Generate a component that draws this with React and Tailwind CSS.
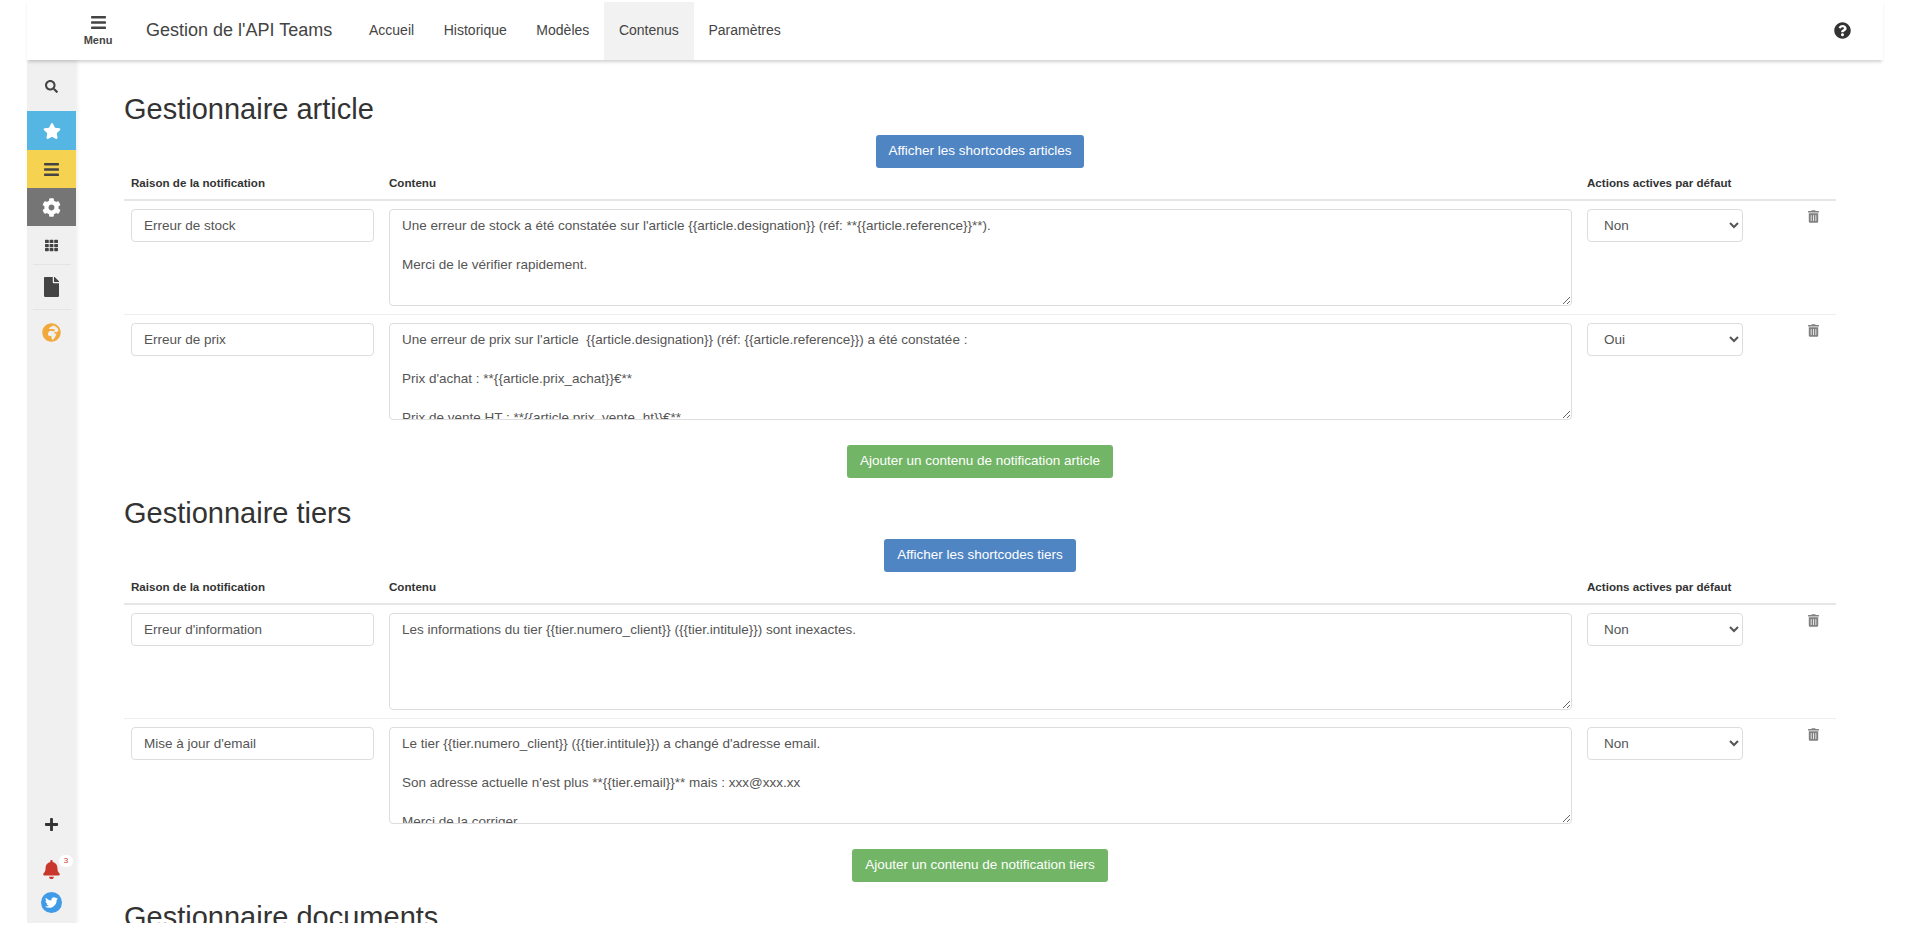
import { FaSearch, FaStar, FaBars, FaCog, FaTh, FaFile, FaGlobeAfrica, FaPlus, FaBell, FaTwitter, FaQuestionCircle, FaTrashAlt } from 'react-icons/fa';

const navLinks = ['Accueil', 'Historique', 'Modèles', 'Contenus', 'Paramètres'];

const sections = [
  {
    title: 'Gestionnaire article',
    shortcodes: 'Afficher les shortcodes articles',
    add: 'Ajouter un contenu de notification article',
    rows: [
      {
        reason: 'Erreur de stock',
        active: 'Non',
        content: "Une erreur de stock a été constatée sur l'article {{article.designation}} (réf: **{{article.reference}}**).\n\nMerci de le vérifier rapidement.",
      },
      {
        reason: 'Erreur de prix',
        active: 'Oui',
        content: "Une erreur de prix sur l'article  {{article.designation}} (réf: {{article.reference}}) a été constatée :\n\nPrix d'achat : **{{article.prix_achat}}€**\n\nPrix de vente HT : **{{article.prix_vente_ht}}€**",
      },
    ],
  },
  {
    title: 'Gestionnaire tiers',
    shortcodes: 'Afficher les shortcodes tiers',
    add: 'Ajouter un contenu de notification tiers',
    rows: [
      {
        reason: "Erreur d'information",
        active: 'Non',
        content: 'Les informations du tier {{tier.numero_client}} ({{tier.intitule}}) sont inexactes.',
      },
      {
        reason: "Mise à jour d'email",
        active: 'Non',
        content: "Le tier {{tier.numero_client}} ({{tier.intitule}}) a changé d'adresse email.\n\nSon adresse actuelle n'est plus **{{tier.email}}** mais : xxx@xxx.xx\n\nMerci de la corriger.",
      },
    ],
  },
];

function Section({ section }) {
  return (
    <section>
      <h2 className="text-[29px] leading-[33px] text-[#333] mb-[9px]">{section.title}</h2>
      <div className="flex justify-center">
        <button className="h-[33px] px-[13px] bg-[#5085c4] rounded-[3px] text-white text-[13.5px]">{section.shortcodes}</button>
      </div>
      <div className="grid grid-cols-[258px_1198px_228px_1fr] mt-[5px] h-[28px] border-b-2 border-[#e6e6e6] text-[11.6px] font-bold text-[#333] leading-[20px]">
        <div className="pl-[7px]">Raison de la notification</div>
        <div className="pl-[7px]">Contenu</div>
        <div className="pl-[7px]">Actions actives par défaut</div>
      </div>
      {section.rows.map((row, i) => (
        <div key={row.reason} className={`grid grid-cols-[258px_1198px_228px_1fr] pt-[8px] h-[113px] ${i > 0 ? 'border-t border-[#eee]' : ''}`}>
          <div className="px-[7px]">
            <input defaultValue={row.reason} className="w-[243px] h-[33px] pb-[1px] px-[12px] border border-[#ddd] rounded-[4px] text-[13.5px] text-[#555] outline-none" />
          </div>
          <div className="px-[7px]">
            <textarea defaultValue={row.content} className="block w-[1183px] h-[97px] px-[12px] py-[6px] border border-[#ddd] rounded-[4px] text-[13.5px] leading-[19.5px] text-[#555] overflow-hidden outline-none" />
          </div>
          <div className="px-[7px]">
            <select defaultValue={row.active} className="w-[156px] h-[33px] pl-[12px] pr-[4px] border border-[#ddd] rounded-[4px] bg-white text-[13.5px] text-[#555] outline-none">
              <option>Non</option>
              <option>Oui</option>
            </select>
          </div>
          <div className="pt-[1px]">
            <FaTrashAlt className="w-[11px] h-[13px] text-[#808080]" />
          </div>
        </div>
      ))}
      <div className="flex justify-center mt-[18px]">
        <button className="h-[33px] px-[13px] bg-[#72b566] rounded-[3px] text-white text-[13.5px]">{section.add}</button>
      </div>
    </section>
  );
}

export default function App() {
  return (
    <div className="h-[945px] overflow-hidden bg-white font-['Liberation_Sans',Arial,sans-serif]">
      <header className="h-[60px] ml-[27px] mr-[37px] flex items-center shadow-[0_3px_3px_-1px_rgba(0,0,0,0.18)] relative z-10 bg-white">
        <div className="w-[56px] ml-[43px] flex flex-col items-center text-[11px] font-bold text-[#444] leading-none">
          <FaBars className="w-[15px] h-[17px] text-[#444]" />
          <span className="mt-[4px]">Menu</span>
        </div>
        <div className="ml-[20px] text-[18px] text-[#444]">Gestion de l'API Teams</div>
        <nav className="ml-[22px] flex h-full items-end text-[14px] text-[#444]">
          {navLinks.map((link) => (
            <div key={link} className={`h-[58px] pb-[2px] px-[14.8px] flex items-center ${link === 'Contenus' ? 'bg-[#f2f2f2]' : ''}`}>{link}</div>
          ))}
        </nav>
        <FaQuestionCircle className="ml-auto mr-[32px] w-[17px] h-[17px] text-[#333]" />
      </header>
      <div className="h-[863px] ml-[27px] flex overflow-hidden">
        <aside className="w-[49px] shrink-0 bg-[#f0f0f0] shadow-[2px_0_3px_rgba(0,0,0,0.06)] flex flex-col items-center">
          <div className="h-[51px] pt-[2px] w-full flex items-center justify-center"><FaSearch className="w-[13px] h-[13px] text-[#444]" /></div>
          <div className="h-[39px] w-full bg-[#55b5e3] flex items-center justify-center"><FaStar className="w-[18px] h-[18px] text-white" /></div>
          <div className="h-[38px] w-full bg-[#f5d24f] flex items-center justify-center"><FaBars className="w-[17px] h-[17px] text-[#444]" /></div>
          <div className="h-[38px] w-full bg-[#757575] flex items-center justify-center"><FaCog className="w-[19px] h-[19px] text-white" /></div>
          <div className="h-[39px] w-[38px] flex items-center justify-center border-b border-[#e4e4e4]"><FaTh className="w-[13px] h-[13px] text-[#444]" /></div>
          <div className="h-[45px] w-[38px] flex items-center justify-center border-b border-[#e4e4e4]"><FaFile className="w-[15px] h-[20px] text-[#444]" /></div>
          <div className="h-[45px] w-full flex items-center justify-center"><FaGlobeAfrica className="w-[19px] h-[19px] text-[#f2a93b]" /></div>
          <div className="mt-auto mb-[6px] text-[#333]"><FaPlus className="w-[15px] h-[15px]" /></div>
          <div className="relative mt-[22px]">
            <FaBell className="w-[17px] h-[19px] text-[#c9372c]" />
            <span className="absolute top-[-5px] left-[16px] w-[14px] h-[12px] rounded-full bg-white text-[#c9372c] text-[8px] leading-[12px] text-center">3</span>
          </div>
          <div className="mt-[13px] mb-[10px] w-[21px] h-[21px] rounded-full bg-[#3f9be8] flex items-center justify-center"><FaTwitter className="w-[13px] h-[13px] text-white" /></div>
        </aside>
        <main className="flex-1 min-w-0 pl-[48px] pr-[84px] pt-[33px] flex flex-col gap-[19px]">
          {sections.map((section) => <Section key={section.title} section={section} />)}
          <h2 className="text-[29px] leading-[33px] text-[#333]">Gestionnaire documents</h2>
        </main>
      </div>
    </div>
  );
}
